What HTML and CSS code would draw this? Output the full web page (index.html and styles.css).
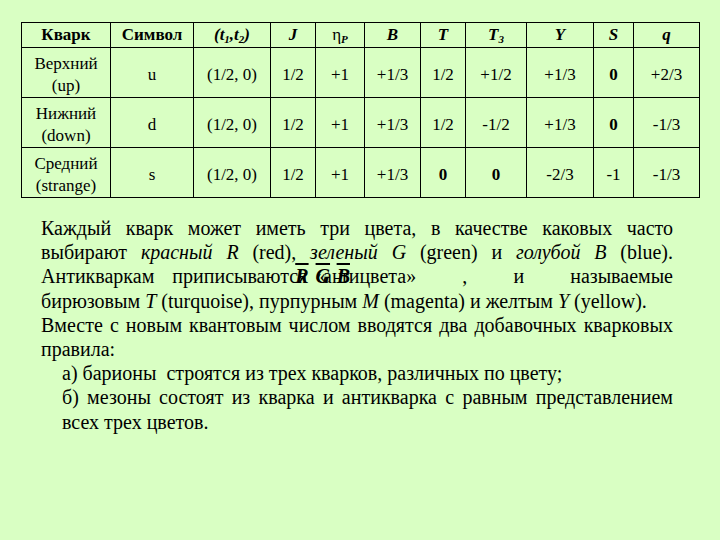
FILE: index.html
```html
<!DOCTYPE html>
<html lang="ru">
<head>
<meta charset="utf-8">
<title>Кварки</title>
<link rel="stylesheet" href="styles.css">
</head>
<body>
<div class="page">
  <table class="quarks">
    <colgroup>
      <col class="c-name"><col class="c-sym"><col class="c-t"><col class="c-j"><col class="c-eta">
      <col class="c-b"><col class="c-tt"><col class="c-t3"><col class="c-y"><col class="c-s"><col class="c-q">
    </colgroup>
    <thead>
      <tr>
        <th>Кварк</th>
        <th>Символ</th>
        <th class="it">(t<sub>1</sub>,t<sub>2</sub>)</th>
        <th class="it">J</th>
        <th class="eta">η<sub class="it">P</sub></th>
        <th class="it">B</th>
        <th class="it">T</th>
        <th class="it">T<sub>3</sub></th>
        <th class="it">Y</th>
        <th class="it">S</th>
        <th class="it">q</th>
      </tr>
    </thead>
    <tbody>
      <tr>
        <td>Верхний<br>(up)</td><td>u</td><td>(1/2, 0)</td><td>1/2</td><td>+1</td>
        <td>+1/3</td><td>1/2</td><td>+1/2</td><td>+1/3</td><td class="zero">0</td><td>+2/3</td>
      </tr>
      <tr>
        <td>Нижний<br>(down)</td><td>d</td><td>(1/2, 0)</td><td>1/2</td><td>+1</td>
        <td>+1/3</td><td>1/2</td><td>-1/2</td><td>+1/3</td><td class="zero">0</td><td>-1/3</td>
      </tr>
      <tr>
        <td>Средний<br>(strange)</td><td>s</td><td>(1/2, 0)</td><td>1/2</td><td>+1</td>
        <td>+1/3</td><td class="zero">0</td><td class="zero">0</td><td>-2/3</td><td>-1</td><td>-1/3</td>
      </tr>
    </tbody>
  </table>

  <div class="text">
    <div class="line just">Каждый кварк может иметь три цвета, в качестве каковых часто</div>
    <div class="line just">выбирают <i>красный R</i> (red), <i>зеленый G</i> (green) и <i>голубой B</i> (blue).</div>
    <div class="line spread">
      <span class="grp"><span class="w-first">Антикваркам</span>приписываются<span class="ov ov-r">R</span> «<span class="ov ov-g">G</span>ан<span class="ov ov-b">B</span>тицвета»</span>
      <span>,</span>
      <span>и</span>
      <span>называемые</span>
    </div>
    <div class="line">бирюзовым <i>T</i> (turquoise), пурпурным <i>M</i> (magenta) и желтым <i>Y</i> (yellow).</div>
    <div class="line just">Вместе с новым квантовым числом вводятся два добавочных кварковых</div>
    <div class="line">правила:</div>
    <div class="line item">а) барионы&nbsp; строятся из трех кварков, различных по цвету;</div>
    <div class="line item just">б) мезоны состоят из кварка и антикварка с равным представлением</div>
    <div class="line item">всех трех цветов.</div>
  </div>
</div>
</body>
</html>
```

FILE: styles.css
```css
html, body {
  margin: 0;
  padding: 0;
}

body {
  background: #d9ffc3;
  color: #000;
  font-family: "Tinos", "Liberation Serif", serif;
}

.page {
  width: 720px;
  height: 540px;
  box-sizing: border-box;
  padding: 22px 0 0 21px;
  overflow: hidden;
}

.quarks {
  border-collapse: collapse;
  table-layout: fixed;
  width: 678px;
  font-size: 17px;
}

.c-name { width: 89px; }
.c-sym { width: 83px; }
.c-t { width: 77px; }
.c-j { width: 45px; }
.c-eta { width: 49px; }
.c-b { width: 56px; }
.c-tt { width: 45px; }
.c-t3 { width: 61px; }
.c-y { width: 67px; }
.c-s { width: 40px; }
.c-q { width: 66px; }

.quarks th,
.quarks td {
  border: 1px solid #000;
  text-align: center;
  vertical-align: middle;
  padding: 0;
  line-height: 24px;
}

.quarks td {
  padding-top: 5px;
  line-height: 22px;
}

.quarks thead tr { height: 25px; }
.quarks tbody tr { height: 50px; }

.quarks th {
  font-weight: bold;
}

.quarks .it {
  font-style: italic;
}

.quarks .eta {
  font-weight: normal;
}

.quarks .eta sub {
  font-weight: bold;
}

.quarks sub {
  font-size: 11px;
  line-height: 0;
  vertical-align: -3px;
}

.quarks .zero {
  font-weight: bold;
}

.text {
  margin: 18px 0 0 20px;
  width: 632px;
  font-size: 20px;
  line-height: 24.2px;
}

.line {
  text-align: left;
  white-space: nowrap;
}

.line.just {
  white-space: normal;
  text-align: justify;
  text-align-last: justify;
}

.line.spread {
  display: flex;
  justify-content: space-between;
}

.w-first {
  margin-right: 18px;
}

.line.item {
  margin-left: 21px;
  width: 611px;
}

.ov {
  font-style: italic;
  font-weight: bold;
  text-decoration: overline;
}

.ov-r { margin-left: -12px; margin-right: 2px; }
.ov-g { margin-left: -10px; margin-right: -7px; }
.ov-b { margin-left: -6px; margin-right: -10px; }
```
